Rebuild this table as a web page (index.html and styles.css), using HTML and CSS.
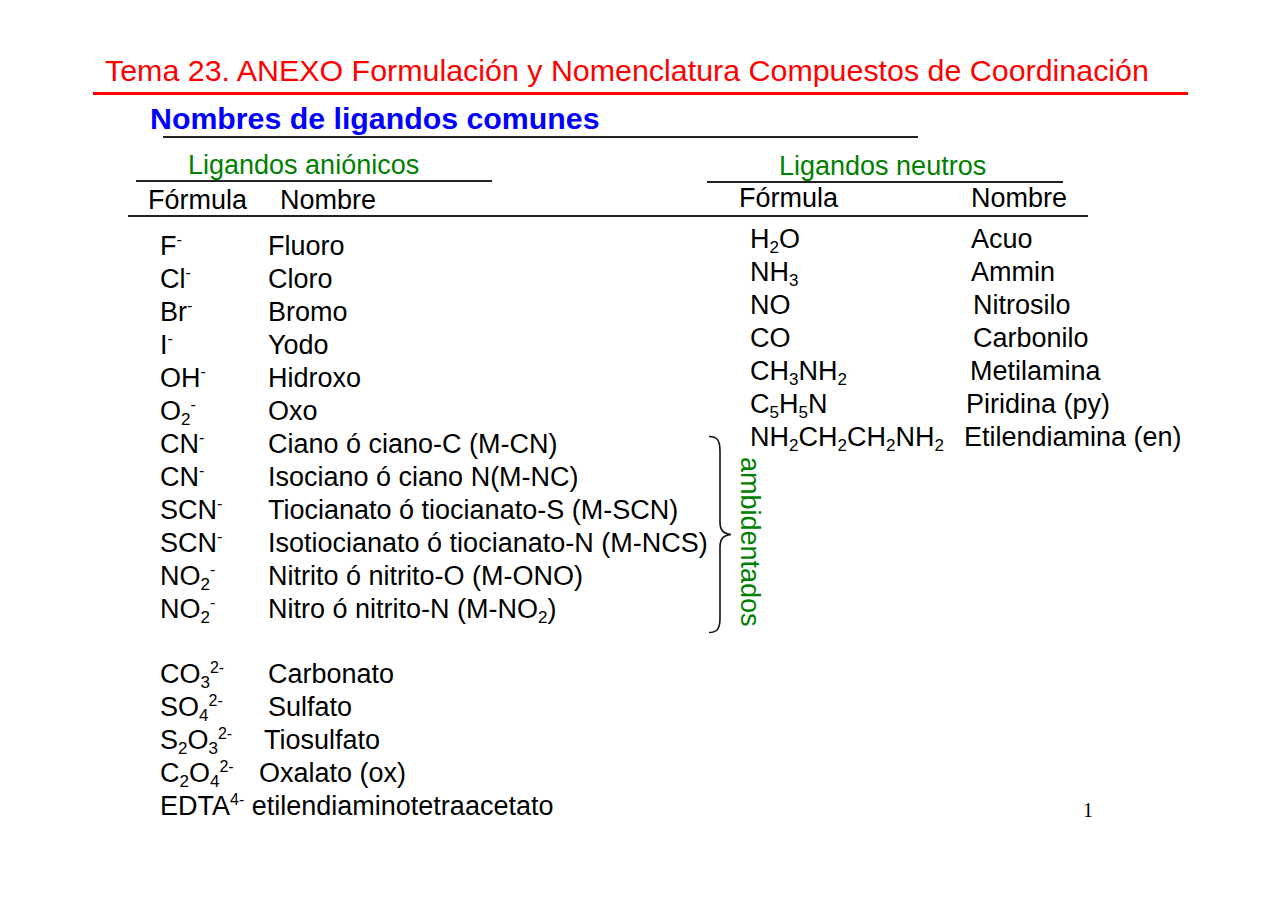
FILE: index.html
```html
<!DOCTYPE html>
<html lang="es">
<head>
<meta charset="utf-8">
<title>Tema 23. ANEXO</title>
<link rel="stylesheet" href="styles.css">
</head>
<body>
<div class="slide">
  <h1 class="title">Tema 23. ANEXO Formulación y Nomenclatura Compuestos de Coordinación</h1>
  <div class="title-rule"></div>
  <h2 class="subtitle">Nombres de ligandos comunes</h2>
  <div class="sub-rule"></div>

  <div class="group-heads">
    <div class="ghead ghead-left">Ligandos aniónicos</div>
    <div class="ghead ghead-right">Ligandos neutros</div>
  </div>

  <div class="col-heads">
    <span>Fórmula</span>
    <span>Nombre</span>
    <span class="raise">Fórmula</span>
    <span class="raise">Nombre</span>
  </div>

  <div class="tables">
    <section class="anion">
      <div class="rows">
        <div class="row"><span class="f">F<sup class="sp">-</sup></span><span>Fluoro</span></div>
        <div class="row"><span class="f">Cl<sup class="sp">-</sup></span><span>Cloro</span></div>
        <div class="row"><span class="f">Br<sup class="sp">-</sup></span><span>Bromo</span></div>
        <div class="row"><span class="f">I<sup class="sp">-</sup></span><span>Yodo</span></div>
        <div class="row"><span class="f">OH<sup class="sp">-</sup></span><span>Hidroxo</span></div>
        <div class="row"><span class="f">O<sub class="sb">2</sub><sup class="sp">-</sup></span><span>Oxo</span></div>
      </div>
      <div class="ambi-group">
        <div class="rows ambi-rows">
          <div class="row"><span class="f">CN<sup class="sp">-</sup></span><span>Ciano ó ciano-C (M-CN)</span></div>
          <div class="row"><span class="f">CN<sup class="sp">-</sup></span><span>Isociano ó ciano N(M-NC)</span></div>
          <div class="row"><span class="f">SCN<sup class="sp">-</sup></span><span>Tiocianato ó tiocianato-S (M-SCN)</span></div>
          <div class="row"><span class="f">SCN<sup class="sp">-</sup></span><span>Isotiocianato ó tiocianato-N (M-NCS)</span></div>
          <div class="row"><span class="f">NO<sub class="sb">2</sub><sup class="sp">-</sup></span><span>Nitrito ó nitrito-O (M-ONO)</span></div>
          <div class="row"><span class="f">NO<sub class="sb">2</sub><sup class="sp">-</sup></span><span>Nitro ó nitrito-N (M-NO<sub class="sb">2</sub>)</span></div>
        </div>
        <svg class="brace" width="26" height="199" viewBox="0 0 26 199" aria-hidden="true">
          <path d="M1,1.5 C9,1.5 12,5 12,16 L12,87 C12,95 15,98.5 23,99.5 C15,100.5 12,104 12,112 L12,183 C12,194 9,197.5 1,197.5" fill="none" stroke="#111" stroke-width="1.6"/>
        </svg>
        <div class="ambi-label">ambidentados</div>
      </div>
      <div class="rows bottom-rows">
        <div class="row"><span class="f">CO<sub class="sb">3</sub><sup class="sp">2-</sup></span><span>Carbonato</span></div>
        <div class="row"><span class="f">SO<sub class="sb">4</sub><sup class="sp">2-</sup></span><span>Sulfato</span></div>
        <div class="row"><span class="f f-104">S<sub class="sb">2</sub>O<sub class="sb">3</sub><sup class="sp">2-</sup></span><span>Tiosulfato</span></div>
        <div class="row"><span class="f f-99">C<sub class="sb">2</sub>O<sub class="sb">4</sub><sup class="sp">2-</sup></span><span>Oxalato (ox)</span></div>
        <div class="row"><span>EDTA<sup class="sp">4-</sup> etilendiaminotetraacetato</span></div>
      </div>
    </section>

    <section class="neutral">
      <div class="rows">
        <div class="row"><span class="nf">H<sub class="sb">2</sub>O</span><span>Acuo</span></div>
        <div class="row"><span class="nf">NH<sub class="sb">3</sub></span><span>Ammin</span></div>
        <div class="row"><span class="nf nf-223">NO</span><span>Nitrosilo</span></div>
        <div class="row"><span class="nf nf-223">CO</span><span>Carbonilo</span></div>
        <div class="row"><span class="nf nf-220">CH<sub class="sb">3</sub>NH<sub class="sb">2</sub></span><span>Metilamina</span></div>
        <div class="row"><span class="nf nf-216">C<sub class="sb">5</sub>H<sub class="sb">5</sub>N</span><span>Piridina (py)</span></div>
        <div class="row"><span class="nf nf-214">NH<sub class="sb">2</sub>CH<sub class="sb">2</sub>CH<sub class="sb">2</sub>NH<sub class="sb">2</sub></span><span>Etilendiamina (en)</span></div>
      </div>
      <div class="page-no">1</div>
    </section>
  </div>
</div>
</body>
</html>
```

FILE: styles.css
```css
html, body {
  margin: 0;
  padding: 0;
  background: #ffffff;
}

.slide {
  width: 1280px;
  height: 905px;
  overflow: hidden;
  font-family: "Liberation Sans", Arial, Helvetica, sans-serif;
  color: #000;
}

.title {
  margin: 53px 0 0 105px;
  font-size: 30.4px;
  line-height: 34px;
  font-weight: normal;
  color: #ff0000;
  white-space: nowrap;
}

.title-rule {
  margin: 5px 0 0 93px;
  width: 1095px;
  height: 3px;
  background: #ff0000;
}

.subtitle {
  margin: 7px 0 0 150px;
  font-size: 30.3px;
  line-height: 34px;
  font-weight: bold;
  color: #0000ff;
  white-space: nowrap;
}

.sub-rule {
  margin: 0 0 0 163px;
  width: 755px;
  height: 2px;
  background: #222;
}

.group-heads {
  display: flex;
  align-items: flex-start;
  margin-top: 13px;
}

.ghead {
  box-sizing: border-box;
  width: 356px;
  font-size: 27px;
  line-height: 29px;
  color: #008000;
  border-bottom: 2px solid #222;
  white-space: nowrap;
}

.ghead-left {
  margin-left: 136px;
  padding-left: 52px;
}

.ghead-right {
  margin-left: 215px;
  padding-left: 72px;
  padding-top: 1px;
}

.col-heads {
  box-sizing: border-box;
  display: grid;
  grid-template-columns: 132px 459px 232px auto;
  margin: 2px 0 0 128px;
  padding-left: 20px;
  width: 960px;
  font-size: 27px;
  line-height: 30px;
  border-bottom: 2px solid #222;
  white-space: nowrap;
}

.raise {
  position: relative;
  top: -2px;
}

.tables {
  display: flex;
  align-items: stretch;
}

.anion {
  flex: 0 0 590px;
  min-width: 0;
  margin-left: 160px;
  margin-top: 13px;
  font-size: 27px;
}

.row {
  display: flex;
  height: 33px;
  line-height: 33px;
  white-space: nowrap;
}

.f {
  flex: 0 0 108px;
}

.f-104 { flex-basis: 104px; }
.f-99 { flex-basis: 99px; }

.sb {
  font-size: 17px;
  line-height: 0;
  vertical-align: -5px;
}

.sp {
  font-size: 16px;
  line-height: 0;
  vertical-align: 10px;
}

.ambi-group {
  display: flex;
  align-items: flex-start;
}

.ambi-rows {
  flex: 0 0 542px;
}

.brace {
  display: block;
  flex: 0 0 26px;
  margin-top: 7px;
}

.ambi-label {
  margin: 29px 0 0 4px;
  writing-mode: vertical-rl;
  font-size: 27px;
  line-height: 24px;
  color: #008000;
  white-space: nowrap;
}

.bottom-rows {
  margin-top: 24px;
}

.neutral {
  display: flex;
  flex-direction: column;
  flex: 1 1 auto;
  min-width: 0;
  font-size: 27px;
}

.neutral .rows {
  margin-top: 6px;
}

.nf {
  flex: 0 0 221px;
}

.nf-223 { flex-basis: 223px; }
.nf-220 { flex-basis: 220px; }
.nf-216 { flex-basis: 216px; }
.nf-214 { flex-basis: 214px; }

.page-no {
  margin: auto 0 3px 333px;
  font-family: "Liberation Serif", "Times New Roman", serif;
  font-size: 20px;
  line-height: 20px;
}
```
